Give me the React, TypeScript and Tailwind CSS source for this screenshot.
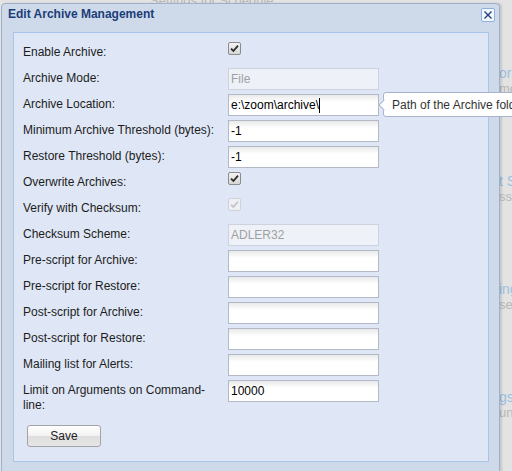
import React from 'react';

type Row =
  | { label: string; kind: 'check'; disabled?: boolean }
  | { label: string; kind: 'input'; value?: string; disabled?: boolean; caret?: boolean };

const rows: Row[] = [
  { label: 'Enable Archive:', kind: 'check' },
  { label: 'Archive Mode:', kind: 'input', value: 'File', disabled: true },
  { label: 'Archive Location:', kind: 'input', value: 'e:\\zoom\\archive\\', caret: true },
  { label: 'Minimum Archive Threshold (bytes):', kind: 'input', value: '-1' },
  { label: 'Restore Threshold (bytes):', kind: 'input', value: '-1' },
  { label: 'Overwrite Archives:', kind: 'check' },
  { label: 'Verify with Checksum:', kind: 'check', disabled: true },
  { label: 'Checksum Scheme:', kind: 'input', value: 'ADLER32', disabled: true },
  { label: 'Pre-script for Archive:', kind: 'input' },
  { label: 'Pre-script for Restore:', kind: 'input' },
  { label: 'Post-script for Archive:', kind: 'input' },
  { label: 'Post-script for Restore:', kind: 'input' },
  { label: 'Mailing list for Alerts:', kind: 'input' },
  { label: 'Limit on Arguments on Command-line:', kind: 'input', value: '10000' },
];

// faded links from the page under the overlay
const behind = [
  { a: 'or', b: 'mo' },
  { a: 't S', b: 'ss' },
  { a: 'ing', b: 'se' },
  { a: 'gs', b: 'un' },
];

const CheckBox: React.FC<{ disabled?: boolean }> = ({ disabled }) => (
  <div
    className={`w-[13px] h-[13px] rounded-[2px] border flex items-center justify-center ${
      disabled
        ? 'border-[#cfd3d9] bg-[#eef0f3]'
        : 'border-[#8c8c8c] bg-[linear-gradient(#f4f4f4,#d6d6d6)]'
    }`}
  >
    <svg width="9" height="9" viewBox="0 0 9 9">
      <path
        d="M1 4.6 L3.4 7 L8 1.6"
        fill="none"
        stroke={disabled ? '#c3c7cc' : '#2b2b2b'}
        strokeWidth="1.8"
      />
    </svg>
  </div>
);

const Field: React.FC<{ value?: string; disabled?: boolean; caret?: boolean }> = ({ value, disabled, caret }) => (
  <div
    className={`w-[151px] h-[22px] border flex items-center pl-[2px] text-[12px] ${
      disabled
        ? 'border-[#cdd3de] bg-[#eef2f8] text-[#a0a0a0]'
        : 'border-[#b4b9c8] bg-[linear-gradient(#e9e9e9,#ffffff_35%)] text-black'
    }`}
  >
    <span>{value}</span>
    {caret && <span className="w-px h-[15px] bg-black" />}
  </div>
);

const Tooltip: React.FC<{ text: string }> = ({ text }) => (
  <div className="absolute left-full top-[-2px] ml-[1px] flex items-center">
    <div className="w-[8px] h-[8px] rotate-45 border-l border-b border-[#a7b4ca] bg-white mr-[-5px] z-10" />
    <div className="h-[25px] w-[140px] rounded-[3px] border border-[#a7b4ca] bg-white pl-[8px] flex items-center text-[12px] text-[#333] whitespace-nowrap">
      {text}
    </div>
  </div>
);

export default function App() {
  return (
    <div className="relative w-[512px] h-[471px] overflow-hidden bg-[#e3e3e3] font-['Liberation_Sans',Arial,sans-serif]">
      {/* page behind the dialog, dimmed */}
      <div className="absolute left-[150px] top-[-9px] text-[13px] text-[#b9b9b9]">Settings for Schedule</div>
      <div className="absolute left-[499px] top-[65px] flex flex-col gap-[76px]">
        {behind.map((t) => (
          <div key={t.a} className="flex flex-col">
            <span className="text-[14px] leading-[16px] text-[#9cc0e2] whitespace-nowrap">{t.a}</span>
            <span className="text-[13px] leading-[16px] text-[#b8b8b8] whitespace-nowrap">{t.b}</span>
          </div>
        ))}
      </div>

      {/* dialog */}
      <div className="absolute left-px top-[3px] w-[499px] h-[480px] rounded-[4px] border border-[#9fb0c9] bg-[#cedaea] shadow-[2px_0_2px_rgba(0,0,0,0.12)]">
        <div className="h-[19px] flex items-center justify-between pl-[6px] pr-[4px]">
          <span className="text-[12px] font-bold text-[#1d3d78]">Edit Archive Management</span>
          <button
            type="button"
            className="w-[14px] h-[14px] mt-[2px] rounded-[2px] border border-[#8eb2e0] bg-[#f3f7fd] flex items-center justify-center"
          >
            <svg width="10" height="10" viewBox="0 0 10 10">
              <path d="M1.5 1.5 L8.5 8.5 M8.5 1.5 L1.5 8.5" stroke="#1d3d78" strokeWidth="1.3" />
            </svg>
          </button>
        </div>

        <div className="mt-[9px] ml-[11px] w-[476px] h-[430px] border border-[#a9c5ec] bg-[#dfe7f6] pl-[9px] pt-[9px]">
          <div className="flex flex-col gap-[4px]">
            {rows.map((r) => (
              <div key={r.label} className="flex items-start min-h-[22px]">
                <div className="w-[198px] mr-[7px] pt-[3px] leading-[15px] text-[12px] text-[#1c1c1c]">{r.label}</div>
                {r.kind === 'check' ? (
                  <CheckBox disabled={r.disabled} />
                ) : (
                  <div className="relative">
                    <Field value={r.value} disabled={r.disabled} caret={r.caret} />
                    {r.caret && <Tooltip text="Path of the Archive folder" />}
                  </div>
                )}
              </div>
            ))}
          </div>
          <button
            type="button"
            className="mt-[12px] ml-[4px] w-[74px] h-[22px] rounded-[3px] border border-[#a3a3a3] bg-[linear-gradient(#ffffff,#f2f2f2_50%,#dedede_50%,#e6e6e6)] text-[12px] text-[#222]"
          >
            Save
          </button>
        </div>
      </div>
    </div>
  );
}
